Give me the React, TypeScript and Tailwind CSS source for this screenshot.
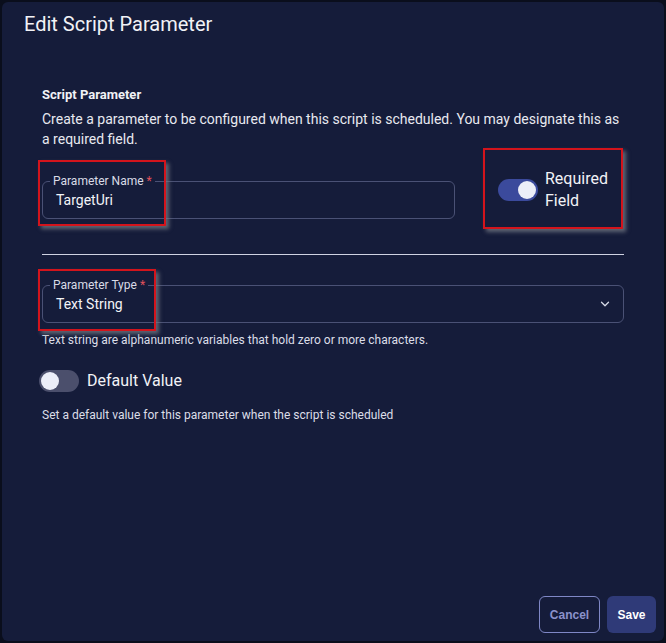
import { ChevronDown } from "lucide-react";

interface ToggleProps {
  on: boolean;
}

function Toggle({ on }: ToggleProps) {
  return (
    <div
      className={`w-[40px] h-[22px] rounded-full flex items-center px-[2px] shrink-0 ${
        on ? "bg-[#3b4a9c] justify-end" : "bg-[#4b4f6c] justify-start"
      }`}
    >
      <div className="w-[18px] h-[18px] rounded-full bg-[#eceef8]" />
    </div>
  );
}

interface OutlinedFieldProps {
  label: string;
  value: string;
  select?: boolean;
  className?: string;
}

function OutlinedField({ label, value, select, className }: OutlinedFieldProps) {
  return (
    <fieldset className={`border border-[#4a5175] rounded-[6px] ${className ?? ""}`}>
      <legend className="ml-[7px] px-[3px] text-[12px] leading-[14px] text-[#d9dbe6]">
        {label}
        <span className="text-[#e0505a] ml-[3px]">*</span>
      </legend>
      <div className="flex items-center h-[30px] pl-[13px] pr-[11px] pb-[6px]">
        <span className="flex-1 text-[14px] leading-[20px] text-[#f3f4f8]">{value}</span>
        {select && <ChevronDown className="w-[14px] h-[14px] text-[#d6d9e6]" strokeWidth={2.25} />}
      </div>
    </fieldset>
  );
}

// red annotation boxes drawn over the screenshot
function Callout({ className }: { className: string }) {
  return (
    <div
      className={`absolute border-2 border-[#d3141c] shadow-[3px_3px_4px_rgba(120,125,135,0.75)] pointer-events-none ${className}`}
    />
  );
}

export default function App() {
  return (
    <div
      className="w-[666px] h-[643px] bg-[#0a0e1c] p-[2px]"
      style={{ fontFamily: "Roboto, 'Liberation Sans', sans-serif" }}
    >
      <div className="relative h-full rounded-[6px] bg-[#151c3a] flex flex-col text-[#f1f2f6]">
        {/* Header */}
        <div className="pl-[22px] pt-[8px]">
          <h1 className="text-[20px] leading-[28px] font-normal">Edit Script Parameter</h1>
        </div>

        {/* Body */}
        <div className="px-[40px]">
          <h2 className="mt-[48px] text-[13px] leading-[18px] font-bold">Script Parameter</h2>
          <p className="mt-[5px] text-[14px] leading-[20px] text-[#e8e9f0]">
            Create a parameter to be configured when this script is scheduled. You may designate this as a
            required field.
          </p>

          <div className="mt-[19px] flex items-start">
            <OutlinedField label="Parameter Name" value="TargetUri" className="mt-[6px] w-[413px]" />
            <div className="ml-[43px] flex items-center gap-[7px]">
              <Toggle on />
              <span className="text-[16px] leading-[22px] text-[#f1f2f6]">
                Required
                <br />
                Field
              </span>
            </div>
          </div>

          <div className="mt-[35px] h-px bg-[#cfd2e2]" />

          <OutlinedField label="Parameter Type" value="Text String" select className="mt-[23px]" />
          <p className="mt-[10px] text-[12px] leading-[14px] text-[#dcdee8]">
            Text string are alphanumeric variables that hold zero or more characters.
          </p>

          <div className="mt-[23px] -ml-[3px] flex items-center gap-[8px]">
            <Toggle on={false} />
            <span className="text-[16px] leading-[22px]">Default Value</span>
          </div>
          <p className="mt-[16px] text-[12px] leading-[14px] text-[#dcdee8]">
            Set a default value for this parameter when the script is scheduled
          </p>
        </div>

        {/* Footer */}
        <div className="mt-auto flex justify-end gap-[7px] pr-[8px] pb-[8px]">
          <button
            className="w-[61px] h-[37px] rounded-[6px] border border-[#7f87c6] text-[12px] font-bold text-[#8b92cb]"
            style={{ fontFamily: "'Liberation Sans', Arial, sans-serif" }}
          >
            Cancel
          </button>
          <button
            className="w-[49px] h-[37px] rounded-[6px] bg-[#2f3a78] text-[12px] font-bold text-white"
            style={{ fontFamily: "'Liberation Sans', Arial, sans-serif" }}
          >
            Save
          </button>
        </div>

        <Callout className="left-[36px] top-[158px] w-[128px] h-[66px]" />
        <Callout className="left-[481px] top-[146px] w-[140px] h-[81px]" />
        <Callout className="left-[36px] top-[267px] w-[118px] h-[62px]" />
      </div>
    </div>
  );
}
